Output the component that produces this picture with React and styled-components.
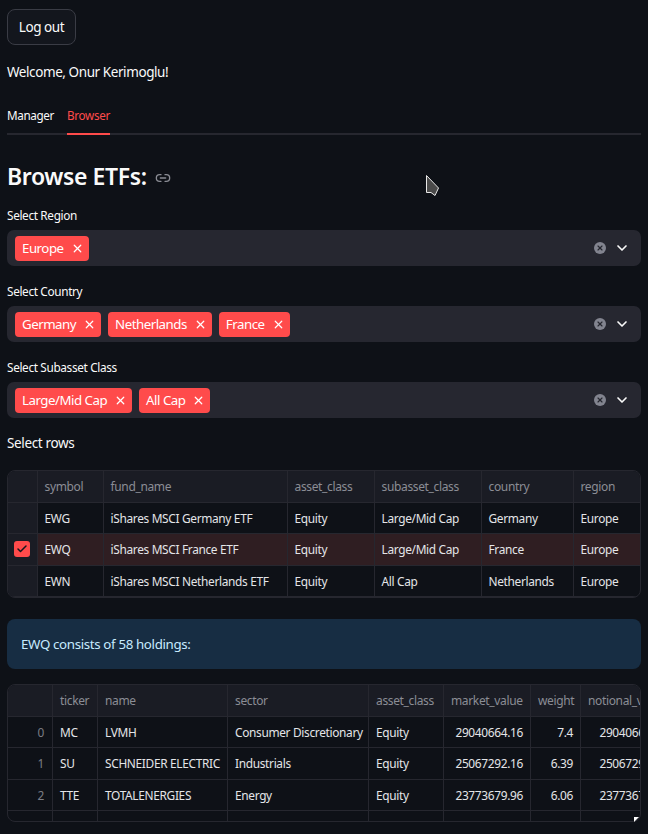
import React from 'react';
import styled, { createGlobalStyle } from 'styled-components';
import { X, ChevronDown, Link2, Check } from 'lucide-react';

const GlobalStyle = createGlobalStyle`
  html, body {
    margin: 0;
    padding: 0;
    height: 100%;
    background: #0e1117;
    overflow: hidden;
  }
  * {
    box-sizing: border-box;
  }
`;

const Page = styled.div`
  position: relative;
  width: 648px;
  height: 834px;
  overflow: hidden;
  padding: 9px 7px 0;
  background: #0e1117;
  color: #fafafa;
  font-family: 'Noto Sans', 'Liberation Sans', sans-serif;
  letter-spacing: -0.35px;
`;

const LogoutButton = styled.button`
  display: block;
  width: 69px;
  height: 36px;
  padding: 0 0 1px;
  border: 1px solid #3a3c45;
  border-radius: 8px;
  background: #13161d;
  color: #fafafa;
  font: inherit;
  font-size: 13.5px;
  letter-spacing: -0.45px;
`;

const Welcome = styled.p`
  margin: 17px 0 0;
  height: 20px;
  font-size: 13.5px;
  line-height: 20px;
  letter-spacing: -0.42px;
`;

const Tabs = styled.div`
  display: flex;
  gap: 13px;
  height: 30px;
  margin-top: 23px;
  border-bottom: 2px solid #26272f;
`;

const Tab = styled.div`
  height: 30px;
  font-size: 11.7px;
  line-height: 20px;
  color: ${(p) => (p.$active ? '#ff4b4b' : '#fafafa')};
  border-bottom: 2px solid ${(p) => (p.$active ? '#ff4b4b' : 'transparent')};
`;

const Heading = styled.h2`
  display: flex;
  align-items: center;
  gap: 8px;
  height: 36px;
  margin: 23px 0 0;
  font-size: 23px;
  font-weight: 600;
  line-height: 36px;
  letter-spacing: -0.38px;
  svg {
    margin-top: 4px;
    color: #8a8c94;
  }
`;

const FieldLabel = styled.label`
  display: block;
  height: 16px;
  margin-top: ${(p) => p.$top}px;
  font-size: 11.8px;
  line-height: 16px;
  color: #fafafa;
`;

const SelectBox = styled.div`
  display: flex;
  align-items: center;
  gap: 7px;
  height: 36px;
  margin-top: 7px;
  padding: 0 11px 0 8px;
  border-radius: 7px;
  background: #262730;
`;

const Chip = styled.span`
  display: inline-flex;
  align-items: center;
  gap: 7px;
  height: 25px;
  padding: 0 5px 0 7px;
  border-radius: 4px;
  background: #ff4b4b;
  color: #fff;
  font-size: 13.3px;
  letter-spacing: -0.5px;
  svg {
    flex: none;
  }
`;

const SelectActions = styled.div`
  display: flex;
  align-items: center;
  gap: 8px;
  margin-left: auto;
`;

const ClearDot = styled.span`
  display: flex;
  align-items: center;
  justify-content: center;
  width: 12px;
  height: 12px;
  border-radius: 50%;
  background: #82848f;
  color: #262730;
`;

const PlainLine = styled.p`
  height: 20px;
  margin: 15px 0 0;
  font-size: 13.5px;
  line-height: 20px;
`;

const TableFrame = styled.div`
  height: ${(p) => p.$height}px;
  margin-top: ${(p) => p.$top}px;
  overflow: hidden;
  border: 1px solid #26272f;
  border-radius: 8px;
`;

const Row = styled.div`
  display: grid;
  grid-template-columns: ${(p) => p.$columns};
  height: ${(p) => p.$height || 31.5}px;
  background: ${(p) => (p.$selected ? '#2f1e22' : 'transparent')};
`;

const Cell = styled.div`
  display: flex;
  align-items: center;
  justify-content: ${(p) => (p.$right ? 'flex-end' : 'flex-start')};
  min-width: 0;
  overflow: hidden;
  padding: 0 7px;
  white-space: nowrap;
  font-size: 11.9px;
  letter-spacing: -0.33px;
  border-right: 1px solid #26272f;
  border-bottom: 1px solid #26272f;
  color: #e4e5e8;
  &:last-child {
    border-right: none;
  }
`;

const HeaderCell = styled(Cell)`
  background: #1a1c24;
  color: #8b8d95;
  font-size: 12px;
  letter-spacing: -0.35px;
`;

const MarkerCell = styled(Cell)`
  justify-content: ${(p) => (p.$right ? 'flex-end' : 'center')};
  padding: ${(p) => (p.$right ? '0 8px' : '0')};
  background: ${(p) => (p.$index ? 'transparent' : '#1a1c24')};
  color: #7b7d85;
`;

const CheckBox = styled.span`
  display: flex;
  align-items: center;
  justify-content: center;
  width: 16px;
  height: 16px;
  border-radius: 3px;
  background: #ff4b4b;
  color: #14161c;
`;

const Info = styled.div`
  display: flex;
  align-items: center;
  height: 50px;
  margin-top: 21px;
  padding: 0 14px;
  border-radius: 8px;
  background: #172d43;
  color: #c7ebff;
  font-size: 13.3px;
`;

const ResizeHandle = styled.span`
  position: absolute;
  left: 634px;
  top: 817px;
  width: 5px;
  height: 5px;
  background: #fff;
  clip-path: polygon(0 0, 100% 0, 0 100%);
`;

const Cursor = styled.svg`
  position: absolute;
  left: 425px;
  top: 174px;
`;

const regionColumns = '29.5px 66px 184px 87px 107px 92px 1fr';
const holdingColumns = '45px 45px 130px 141px 75px 87px 50px 93px';

const funds = [
  ['EWG', 'iShares MSCI Germany ETF', 'Equity', 'Large/Mid Cap', 'Germany', 'Europe'],
  ['EWQ', 'iShares MSCI France ETF', 'Equity', 'Large/Mid Cap', 'France', 'Europe'],
  ['EWN', 'iShares MSCI Netherlands ETF', 'Equity', 'All Cap', 'Netherlands', 'Europe'],
];

const holdings = [
  ['0', 'MC', 'LVMH', 'Consumer Discretionary', 'Equity', '29040664.16', '7.4', '29040664.16'],
  ['1', 'SU', 'SCHNEIDER ELECTRIC', 'Industrials', 'Equity', '25067292.16', '6.39', '25067292.16'],
  ['2', 'TTE', 'TOTALENERGIES', 'Energy', 'Equity', '23773679.96', '6.06', '23773679.96'],
];

const filters = [
  { label: 'Select Region', top: 13, chips: ['Europe'] },
  { label: 'Select Country', top: 17, chips: ['Germany', 'Netherlands', 'France'] },
  { label: 'Select Subasset Class', top: 17, chips: ['Large/Mid Cap', 'All Cap'] },
];

const App = () => {
  return (
    <Page>
      <GlobalStyle />
      <LogoutButton>Log out</LogoutButton>
      <Welcome>Welcome, Onur Kerimoglu!</Welcome>
      <Tabs>
        <Tab>Manager</Tab>
        <Tab $active>Browser</Tab>
      </Tabs>
      <Heading>
        Browse ETFs:
        <Link2 size={16} strokeWidth={2} />
      </Heading>
      {filters.map((filter) => (
        <div key={filter.label}>
          <FieldLabel $top={filter.top}>{filter.label}</FieldLabel>
          <SelectBox>
            {filter.chips.map((chip) => (
              <Chip key={chip}>
                {chip}
                <X size={13} strokeWidth={2.25} />
              </Chip>
            ))}
            <SelectActions>
              <ClearDot>
                <X size={8} strokeWidth={3.5} />
              </ClearDot>
              <ChevronDown size={16} strokeWidth={2.5} color="#fafafa" />
            </SelectActions>
          </SelectBox>
        </div>
      ))}
      <PlainLine>Select rows</PlainLine>
      <TableFrame $top={17} $height={128}>
        <Row $columns={regionColumns}>
          <MarkerCell />
          {['symbol', 'fund_name', 'asset_class', 'subasset_class', 'country', 'region'].map((name) => (
            <HeaderCell key={name}>{name}</HeaderCell>
          ))}
        </Row>
        {funds.map((fund) => {
          const selected = fund[0] === 'EWQ';
          return (
            <Row key={fund[0]} $columns={regionColumns} $selected={selected}>
              <MarkerCell>
                {selected && (
                  <CheckBox>
                    <Check size={12} strokeWidth={3} />
                  </CheckBox>
                )}
              </MarkerCell>
              {fund.map((value, i) => (
                <Cell key={i}>{value}</Cell>
              ))}
            </Row>
          );
        })}
      </TableFrame>
      <Info>EWQ consists of 58 holdings:</Info>
      <TableFrame $top={15} $height={138}>
        <Row $columns={holdingColumns}>
          <MarkerCell />
          {['ticker', 'name', 'sector', 'asset_class', 'market_value', 'weight', 'notional_value'].map((name) => (
            <HeaderCell key={name}>{name}</HeaderCell>
          ))}
        </Row>
        {holdings.map((row) => (
          <Row key={row[0]} $columns={holdingColumns}>
            <MarkerCell $index $right>{row[0]}</MarkerCell>
            <Cell>{row[1]}</Cell>
            <Cell>{row[2]}</Cell>
            <Cell>{row[3]}</Cell>
            <Cell>{row[4]}</Cell>
            <Cell $right>{row[5]}</Cell>
            <Cell $right>{row[6]}</Cell>
            <Cell $right>{row[7]}</Cell>
          </Row>
        ))}
        <Row $columns={holdingColumns} $height={11}>
          {holdingColumns.split(' ').map((col, i) => (
            <Cell key={i} />
          ))}
        </Row>
      </TableFrame>
      <ResizeHandle />
      <Cursor width="16" height="23" viewBox="0 0 16 23">
        <path d="M1.5 1.5 L1.5 18.5 L6 18.5 L10 21.5 L13.5 14 L1.5 1.5 Z" fill="#4a4a4a" stroke="#e8e8e8" strokeWidth="1" />
      </Cursor>
    </Page>
  );
};

export default App;
